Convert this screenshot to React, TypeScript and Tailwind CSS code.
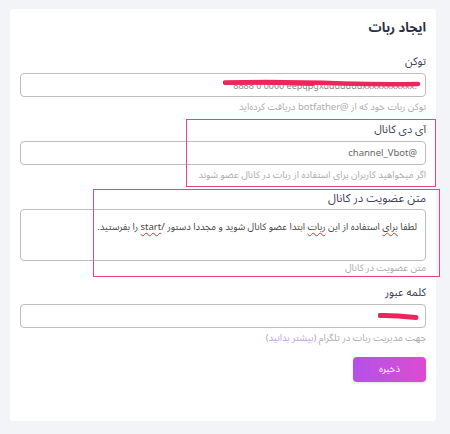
import React from "react";

const font = { fontFamily: '"Noto Sans Arabic", "Vazirmatn", "Noto Sans", "DejaVu Sans", sans-serif' };

export default function App() {
  return (
    <div className="w-[450px] h-[434px] bg-[#f3f4f7] pt-[9px] pl-[10px]" style={font}>
      <div dir="rtl" className="relative w-[426px] h-[412px] bg-white rounded-[3px] px-[10px] pt-[11px]">
        <div className="text-[13px] leading-[16px] font-bold text-[#2b2f3f]">ایجاد ربات</div>

        {/* Token */}
        <div className="mt-[18px] text-[11px] leading-[16px] text-[#3c4157]">توکن</div>
        <div className="relative mt-[3px] h-[24px] border border-[#bdbdbd] rounded-[4px] px-[8px] flex items-center">
          <span dir="ltr" className="text-[9px] text-[#8a8a8a] pt-[4px]">8888 0 0000 eepqpgxdddddddxxxxxxxxxxx:</span>
          <svg className="absolute left-[202px] top-[5px]" width="198" height="10" viewBox="0 0 198 10">
            <path d="M2 3.5 C40 2.5 80 3 120 4.5 C150 5.5 175 5.5 195 5" stroke="#f0245c" strokeWidth="4.5" fill="none" strokeLinecap="round" />
            <path d="M2 4.5 C30 4 60 4.5 90 5.5" stroke="#f0245c" strokeWidth="3" fill="none" strokeLinecap="round" />
          </svg>
        </div>
        <div className="mt-[3px] text-[9.5px] leading-[14px] text-[#ababab]">توکن ربات خود که از @botfather دریافت کرده‌اید</div>

        {/* Channel */}
        <div className="mt-[8px] text-[11px] leading-[16px] text-[#3c4157]">آی دی کانال</div>
        <div className="mt-[3px] h-[24px] border border-[#bdbdbd] rounded-[4px] px-[8px] flex items-center text-[9.5px] text-[#666]">
          @channel_Vbot
        </div>
        <div className="mt-[3px] text-[9.5px] leading-[14px] text-[#ababab]">اگر میخواهید کاربران برای استفاده از ربات در کانال عضو شوند</div>

        {/* Membership text */}
        <div className="mt-[8px] text-[11.5px] leading-[16px] text-[#3c4157]">متن عضویت در کانال</div>
        <div className="mt-[3px] h-[52px] border border-[#bdbdbd] rounded-[4px] px-[8px] pt-[9px] text-[9.5px] leading-[16px] text-[#444]">
          لطفا <span className="underline decoration-wavy decoration-[#e0302a] decoration-1 underline-offset-2">برای</span> استفاده از این <span className="underline decoration-wavy decoration-[#e0302a] decoration-1 underline-offset-2">ربات</span> ابتدا عضو کانال شوید و مجددا دستور /<span className="underline decoration-wavy decoration-[#e0302a] decoration-1 underline-offset-2">start</span> را بفرستید.
        </div>
        <div className="mt-[0px] text-[9.5px] leading-[14px] text-[#ababab]">متن عضویت در کانال</div>

        {/* Password */}
        <div className="mt-[10px] text-[11px] leading-[16px] text-[#3c4157]">کلمه عبور</div>
        <div className="relative mt-[3px] h-[24px] border border-[#bdbdbd] rounded-[4px] px-[8px] flex items-center">
          <svg className="absolute left-[357px] top-[7px]" width="42" height="10" viewBox="0 0 42 10">
            <path d="M2 3.5 C12 3 24 4 38 5.5" stroke="#f0245c" strokeWidth="5" fill="none" strokeLinecap="round" />
          </svg>
        </div>
        <div className="mt-[3px] text-[9.5px] leading-[14px] text-[#ababab]">
          جهت مدیریت ربات در تلگرام (<span className="text-[#c89be3]">بیشتر بدانید</span>)
        </div>

        <div className="mt-[12px] flex">
          <button className="w-[73px] h-[25px] rounded-[4px] bg-linear-to-l from-[#dc4bd2] to-[#b450e8] text-white text-[9.5px] flex items-center justify-center shadow-sm">
            ذخیره
          </button>
        </div>

        {/* annotation boxes */}
        <div className="absolute left-[176px] top-[110px] w-[250px] h-[68px] border-[1.5px] border-[#e8467a] pointer-events-none" />
        <div className="absolute left-[83px] top-[180px] w-[347px] h-[88px] border-[1.5px] border-[#e8467a] pointer-events-none" />
      </div>
    </div>
  );
}
